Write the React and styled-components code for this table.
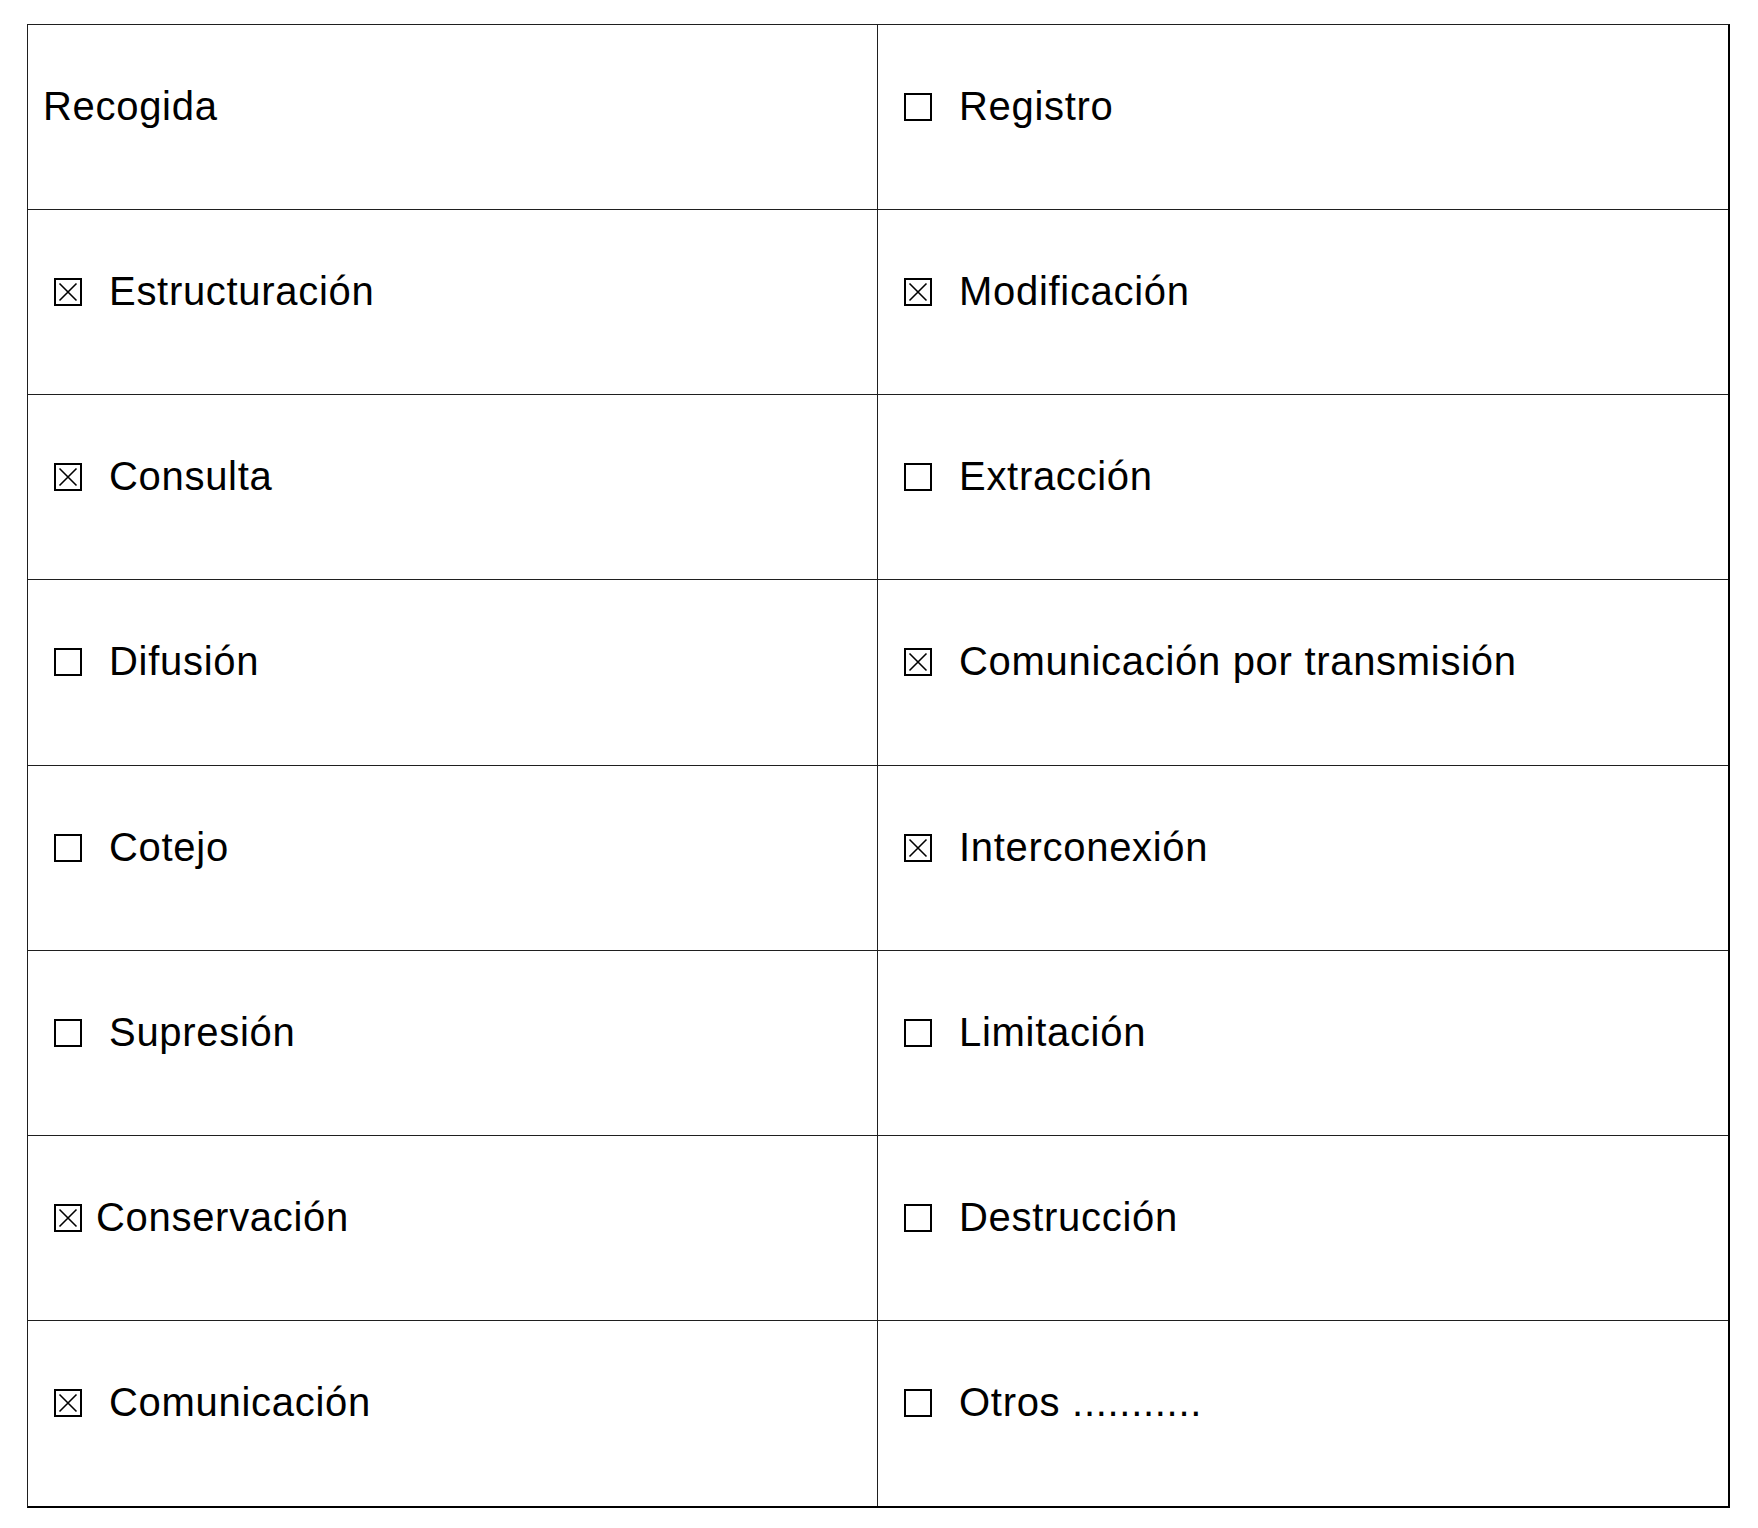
import React from "react";
import styled, { createGlobalStyle } from "styled-components";

const GlobalStyle = createGlobalStyle`
  html, body {
    margin: 0;
    padding: 0;
    background: #ffffff;
  }
  body {
    font-family: "Liberation Sans", Arial, sans-serif;
    color: #000;
  }
`;

const Page = styled.div`
  padding: 24px 0 0 27px;
  width: 1758px;
  height: 1528px;
  box-sizing: border-box;
`;

const Table = styled.div`
  display: grid;
  grid-template-columns: 850px 850px;
  grid-template-rows: repeat(8, 1fr);
  width: 1703px;
  height: 1484px;
  box-sizing: border-box;
  border-top: 1px solid #1f1f1f;
  border-left: 1px solid #1f1f1f;
  border-right: 2px solid #000;
  border-bottom: 2px solid #000;
`;

const Cell = styled.div`
  box-sizing: border-box;
  padding: 58px 0 0 15px;
  border-right: ${(p) => (p.$last ? "none" : "1px solid #1f1f1f")};
  border-bottom: ${(p) => (p.$bottom ? "none" : "1px solid #1f1f1f")};
  font-size: 40px;
  line-height: 46px;
  letter-spacing: 0.7px;
  white-space: pre;
`;

const Label = styled.span`
  margin-left: ${(p) => (p.$tight ? "14px" : "27px")};
`;

const BoxSvg = styled.svg`
  display: inline-block;
  vertical-align: baseline;
  width: 28px;
  height: 28px;
  margin-left: 11px;
  margin-bottom: -1px;
`;

function Check({ checked }) {
  return (
    <BoxSvg viewBox="0 0 28 28" aria-label={checked ? "☒" : "☐"}>
      <rect x="1" y="1" width="26" height="26" fill="none" stroke="#000" strokeWidth="2" />
      {checked && (
        <path d="M5.5 5.5 L22.5 22.5 M22.5 5.5 L5.5 22.5" stroke="#000" strokeWidth="1.6" fill="none" />
      )}
    </BoxSvg>
  );
}

const rows = [
  [{ text: "Recogida", plain: true }, { text: "Registro", checked: false }],
  [{ text: "Estructuración", checked: true }, { text: "Modificación", checked: true }],
  [{ text: "Consulta", checked: true }, { text: "Extracción", checked: false }],
  [{ text: "Difusión", checked: false }, { text: "Comunicación por transmisión", checked: true }],
  [{ text: "Cotejo", checked: false }, { text: "Interconexión", checked: true }],
  [{ text: "Supresión", checked: false }, { text: "Limitación", checked: false }],
  [{ text: "Conservación", checked: true, tight: true }, { text: "Destrucción", checked: false }],
  [{ text: "Comunicación", checked: true }, { text: "Otros ...........", checked: false }],
];

export default function App() {
  return (
    <Page>
      <GlobalStyle />
      <Table>
        {rows.map((row, ri) =>
          row.map((cell, ci) => (
            <Cell key={`${ri}-${ci}`} $last={ci === 1} $bottom={ri === rows.length - 1}>
              {cell.plain ? (
                <span>{cell.text}</span>
              ) : (
                <>
                  <Check checked={cell.checked} />
                  <Label $tight={cell.tight}>{cell.text}</Label>
                </>
              )}
            </Cell>
          ))
        )}
      </Table>
    </Page>
  );
}
